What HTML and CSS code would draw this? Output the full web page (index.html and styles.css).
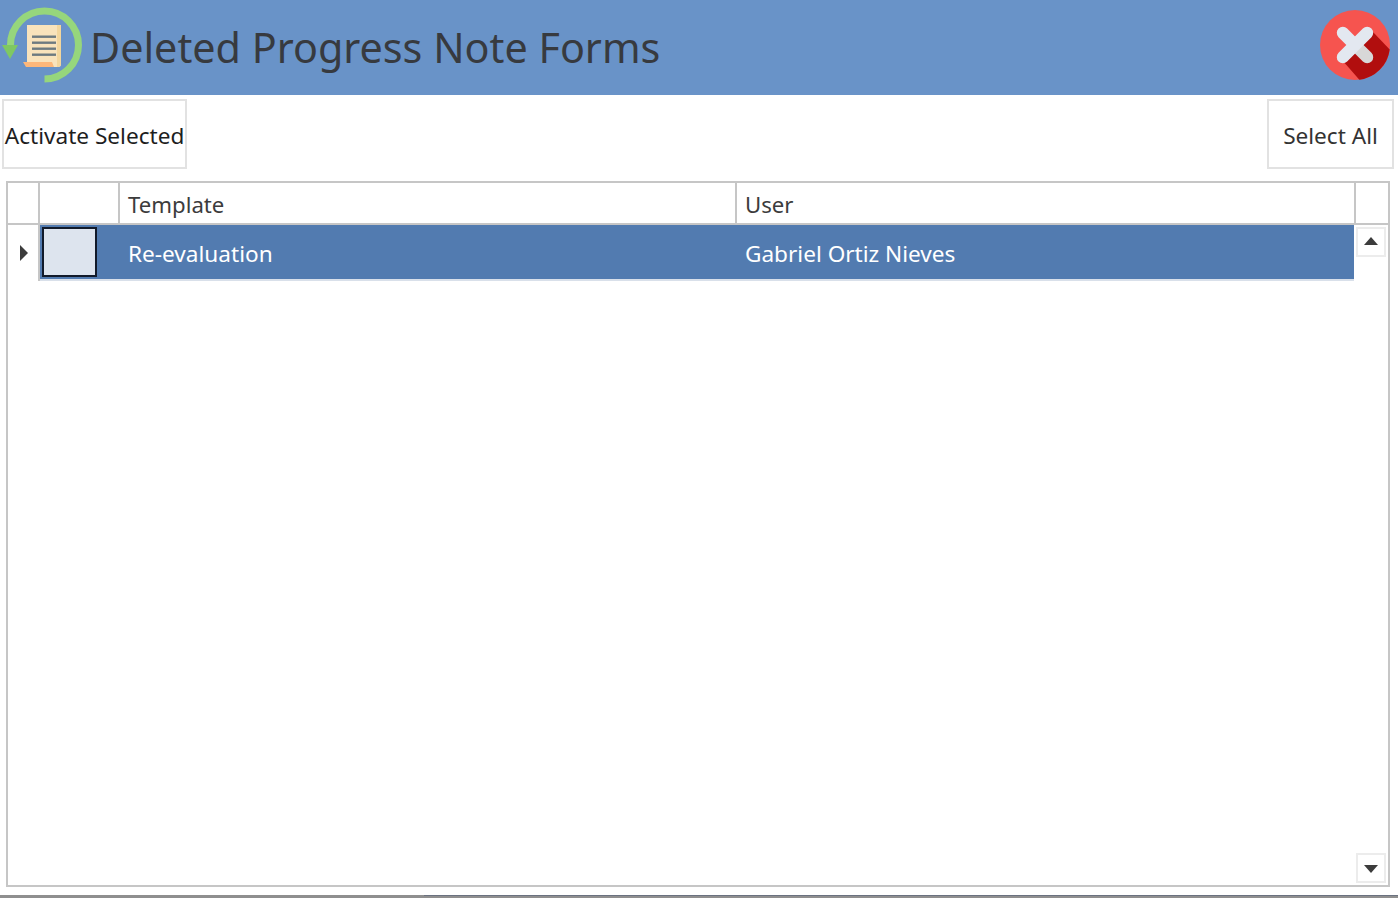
FILE: index.html
```html
<!DOCTYPE html>
<html lang="en">
<head>
    <meta charset="UTF-8">
    <title>Deleted Progress Note Forms</title>
    <link rel="stylesheet" href="styles.css">
</head>
<body>
    <header class="title-bar">
        <svg class="form-icon" width="85" height="95" viewBox="0 0 85 95">
            <path d="M10.500 45 A34 34 0 1 1 44.500 79" fill="none" stroke="#96d67c" stroke-width="7"/>
            <path d="M2 45 H18 L10 59 Z" fill="#7fc862"/>
            <path d="M27 25 H61 V64 Q61 67 58 67 H27 Z" fill="#f9e3bc"/>
            <path d="M57 25 H61 V64 Q61 67 58 67 H57 Z" fill="#f3d69d"/>
            <path d="M23 62 H52 L54 67 H26 Z" fill="#fdb77a"/>
            <g stroke="#6d7a80" stroke-width="2.400">
                <path d="M32 36.700 H56"/>
                <path d="M32 42.700 H56"/>
                <path d="M32 48.700 H56"/>
                <path d="M32 54.700 H56"/>
            </g>
        </svg>
        <h1 class="title">Deleted Progress Note Forms</h1>
        <svg class="close-icon" width="70" height="70" viewBox="0 0 72 72">
            <circle cx="36" cy="36" r="36" fill="#f6544f"/>
            <path d="M24 53 L40.500 71.700 A36 36 0 0 0 71.700 40.500 L54 22 Z" fill="#b10e0e"/>
            <g fill="none" stroke-width="12.500" stroke-linecap="round">
                <path d="M23.500 23.500 L38 38" stroke="#e3e8f0"/>
                <path d="M38 38 L48.500 48.500" stroke="#d8d8d8"/>
                <path d="M48.500 23.500 L23.500 48.500" stroke="#e3e8f0"/>
            </g>
        </svg>
    </header>

    <div class="toolbar">
        <button class="tool-btn activate-btn">Activate Selected</button>
        <button class="tool-btn select-btn">Select All</button>
    </div>

    <div class="grid">
        <div class="grid-main">
            <div class="grid-head">
                <div class="cell-indicator"></div>
                <div class="cell-check"></div>
                <div class="cell-template">Template</div>
                <div class="cell-user">User</div>
            </div>
            <div class="grid-row">
                <div class="row-indicator"><span class="row-arrow"></span></div>
                <div class="row-body">
                    <div class="row-check"><span class="checkbox"></span></div>
                    <div class="row-template">Re-evaluation</div>
                    <div class="row-user">Gabriel Ortiz Nieves</div>
                </div>
            </div>
        </div>
        <div class="scroll-col">
            <div class="scroll-corner"></div>
            <div class="scroll-track">
                <div class="scroll-btn"><span class="arrow-up"></span></div>
                <div class="scroll-btn"><span class="arrow-down"></span></div>
            </div>
        </div>
    </div>

    <div class="bottom-strip"><div class="strip-edge"></div></div>
</body>
</html>
```

FILE: styles.css
```css
:root {
    --line-color: #c6c6c6;
    --btn-line: #e2e2e2;
    --title-blue: #6993c8;
    --row-blue: #527bb0;
}

* {
    box-sizing: border-box;
}

html, body {
    height: 100%;
}

body {
    margin: 0;
    display: flex;
    flex-direction: column;
    font-family: "Noto Sans", "Open Sans", sans-serif;
    color: #3c3c3c;
    background: #fff;
    overflow: hidden;
}

.title-bar {
    height: 95px;
    flex: none;
    display: flex;
    align-items: flex-start;
    padding: 0 8px 0 0;
    background: var(--title-blue);
}

.form-icon {
    flex: none;
    margin-right: 5px;
}

.title {
    flex: 1;
    margin: 0;
    padding-top: 19px;
    font-size: 41.300px;
    line-height: 56px;
    font-weight: 400;
    color: #373a3f;
}

.close-icon {
    flex: none;
    margin-top: 10px;
}

.toolbar {
    flex: none;
    display: flex;
    justify-content: space-between;
    padding: 4px 4px 0 2px;
    height: 86px;
}

.tool-btn {
    height: 70px;
    padding: 2px 0 0;
    border: 2px solid var(--btn-line);
    background: #fff;
    font-family: inherit;
    font-size: 22.600px;
    color: #1e1e1e;
}

.activate-btn {
    width: 185px;
}

.select-btn {
    width: 127px;
    color: #333;
}

.grid {
    flex: none;
    height: 706px;
    margin: 0 8px 0 6px;
    display: flex;
    border: 2px solid var(--line-color);
}

.grid-main {
    width: 1346px;
    flex: none;
}

.grid-head {
    height: 42px;
    display: flex;
    border-bottom: 2px solid var(--line-color);
    font-size: 22.200px;
}

.cell-indicator {
    width: 32px;
    border-right: 2px solid var(--line-color);
}

.cell-check {
    width: 80px;
    border-right: 2px solid var(--line-color);
}

.cell-template {
    width: 617px;
    padding: 1px 0 0 8px;
    border-right: 2px solid var(--line-color);
    line-height: 42px;
}

.cell-user {
    width: 617px;
    padding: 1px 0 0 8px;
    line-height: 42px;
}

.grid-row {
    display: flex;
    height: 56px;
}

.row-indicator {
    width: 32px;
    display: flex;
    align-items: center;
    padding: 0 0 0 12px;
    border-right: 2px solid var(--line-color);
}

.row-arrow {
    border-left: 8px solid #3c3c3c;
    border-top: 8px solid transparent;
    border-bottom: 8px solid transparent;
}

.row-body {
    width: 1314px;
    display: flex;
    align-items: center;
    background: var(--row-blue);
    border-bottom: 2px solid #d9e0ea;
    color: #fff;
    font-size: 22.600px;
}

.row-check {
    width: 80px;
    padding-left: 2px;
}

.checkbox {
    display: block;
    width: 55px;
    height: 50px;
    border: 2px solid #111a2a;
    background: #dde4ee;
}

.row-template {
    width: 617px;
    padding: 2px 0 0 8px;
}

.row-user {
    padding: 2px 0 0 8px;
}

.scroll-col {
    width: 34px;
    flex: none;
    display: flex;
    flex-direction: column;
}

.scroll-corner {
    height: 42px;
    flex: none;
    border-left: 2px solid var(--line-color);
    border-bottom: 2px solid var(--line-color);
}

.scroll-track {
    flex: 1;
    display: flex;
    flex-direction: column;
    justify-content: space-between;
    padding: 2px;
}

.scroll-btn {
    width: 30px;
    height: 30px;
    display: flex;
    align-items: center;
    justify-content: center;
    border: 2px solid #ececec;
}

.arrow-up {
    margin-bottom: 2px;
    border-left: 7px solid transparent;
    border-right: 7px solid transparent;
    border-bottom: 8px solid #3c3c3c;
}

.arrow-down {
    margin-top: 2px;
    border-left: 7px solid transparent;
    border-right: 7px solid transparent;
    border-top: 8px solid #3c3c3c;
}

.bottom-strip {
    flex: none;
    height: 3px;
    margin-top: auto;
    padding-left: 424px;
    background: #8f8f8f;
}

.strip-edge {
    height: 1px;
    background: #6b7280;
}
```
